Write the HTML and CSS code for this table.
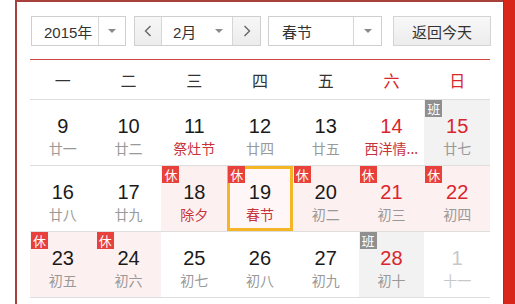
FILE: index.html
```html
<!DOCTYPE html>
<html lang="zh-CN">
<head>
<meta charset="utf-8">
<title>万年历</title>
<link rel="stylesheet" href="styles.css">
</head>
<body>
<div class="frame">
  <div class="panel">
    <div class="controls">
      <div class="select year">
        <span class="sel-text">2015年</span>
        <span class="sel-arrow"><i class="tri"></i></span>
      </div>
      <div class="select month">
        <span class="nav-btn"><svg width="8" height="12" viewBox="0 0 8 12"><polyline points="6.5,1 1.5,6 6.5,11" fill="none" stroke="#666" stroke-width="1.4"/></svg></span>
        <span class="sel-text mid">2月<i class="tri"></i></span>
        <span class="nav-btn next"><svg width="8" height="12" viewBox="0 0 8 12"><polyline points="1.5,1 6.5,6 1.5,11" fill="none" stroke="#666" stroke-width="1.4"/></svg></span>
      </div>
      <div class="select holiday">
        <span class="sel-text">春节</span>
        <span class="sel-arrow"><i class="tri"></i></span>
      </div>
      <div class="today-btn">返回今天</div>
    </div>
    <div class="cal">
      <div class="week">
        <span>一</span><span>二</span><span>三</span><span>四</span><span>五</span><span class="red">六</span><span class="red">日</span>
      </div>
      <div class="row">
        <div class="cell"><b>9</b><em>廿一</em></div>
        <div class="cell"><b>10</b><em>廿二</em></div>
        <div class="cell"><b>11</b><em class="fest">祭灶节</em></div>
        <div class="cell"><b>12</b><em>廿四</em></div>
        <div class="cell"><b>13</b><em>廿五</em></div>
        <div class="cell wk"><b>14</b><em class="fest">西洋情...</em></div>
        <div class="cell wk work"><i class="badge ban">班</i><b>15</b><em>廿七</em></div>
      </div>
      <div class="row">
        <div class="cell"><b>16</b><em>廿八</em></div>
        <div class="cell"><b>17</b><em>廿九</em></div>
        <div class="cell rest"><i class="badge">休</i><b>18</b><em class="fest">除夕</em></div>
        <div class="cell rest today"><i class="badge">休</i><b>19</b><em class="fest">春节</em></div>
        <div class="cell rest"><i class="badge">休</i><b>20</b><em>初二</em></div>
        <div class="cell rest wk"><i class="badge">休</i><b>21</b><em>初三</em></div>
        <div class="cell rest wk"><i class="badge">休</i><b>22</b><em>初四</em></div>
      </div>
      <div class="row">
        <div class="cell rest"><i class="badge">休</i><b>23</b><em>初五</em></div>
        <div class="cell rest"><i class="badge">休</i><b>24</b><em>初六</em></div>
        <div class="cell"><b>25</b><em>初七</em></div>
        <div class="cell"><b>26</b><em>初八</em></div>
        <div class="cell"><b>27</b><em>初九</em></div>
        <div class="cell wk work"><i class="badge ban">班</i><b>28</b><em>初十</em></div>
        <div class="cell other"><b>1</b><em>十一</em></div>
      </div>
    </div>
  </div>
  <div class="redbar"></div>
</div>
</body>
</html>
```
FILE: styles.css
```css
* { box-sizing: border-box; }
html, body { margin: 0; padding: 0; background: #fff; }
body {
  font-family: "Liberation Sans", "Noto Sans CJK SC", sans-serif;
  color: #333;
  width: 515px;
  height: 304px;
  overflow: hidden;
}
.frame { display: flex; height: 304px; }
.panel {
  flex: 1;
  margin-left: 15px;
  border-left: 2px solid #a8403c;
  border-top: 2px solid #a8403c;
  padding: 14px 13px 0 13px;
}
.redbar {
  width: 12px;
  background: #d8261b;
  border-left: 1px solid #c0221a;
}
.controls {
  display: flex;
  align-items: stretch;
  height: 30px;
  font-size: 15px;
}
.select {
  display: flex;
  border: 1px solid #cfcfcf;
  background: #fff;
}
.sel-text {
  display: flex;
  align-items: center;
  padding-left: 12px;
}
.sel-arrow {
  display: flex;
  align-items: center;
  justify-content: center;
  border-left: 1px solid #d6d6d6;
}
.tri {
  display: inline-block;
  width: 0; height: 0;
  border-left: 4px solid transparent;
  border-right: 4px solid transparent;
  border-top: 4px solid #8a8a8a;
}
.year { width: 95px; margin-left: 1px; }
.year .sel-text { width: 66px; }
.year .sel-arrow { width: 27px; }
.month { width: 127px; margin-left: 8px; }
.nav-btn {
  width: 27px;
  display: flex;
  align-items: center;
  justify-content: center;
  background: linear-gradient(#f7f7f7, #ececec);
  border-right: 1px solid #d6d6d6;
}
.nav-btn.next { border-right: 0; border-left: 1px solid #d6d6d6; width: 28px; }
.month .mid {
  flex: 1;
  padding-left: 11px;
  justify-content: space-between;
  padding-right: 9px;
}
.holiday { width: 114px; margin-left: 7px; }
.holiday .sel-text { width: 84px; padding-left: 13px; }
.holiday .sel-arrow { flex: 1; }
.today-btn {
  margin-left: auto;
  width: 98px;
  margin-right: -1px;
  border: 1px solid #d4d4d4;
  background: linear-gradient(#f8f8f8, #ececec);
  display: flex;
  align-items: center;
  justify-content: center;
}
.cal {
  margin-top: 13px;
  border-top: 1px solid #d0463f;
}
.week {
  display: grid;
  grid-template-columns: repeat(7, 1fr);
  height: 40px;
  border-bottom: 1px solid #dedede;
  align-items: center;
  text-align: center;
  font-size: 16px;
  color: #333;
  font-family: "Noto Sans CJK SC", sans-serif;
}
.week .red { color: #d9262c; }
.row {
  display: grid;
  grid-template-columns: repeat(7, 1fr);
  height: 66px;
  border-bottom: 1px solid #dedede;
}
.cell {
  position: relative;
  display: flex;
  flex-direction: column;
  align-items: center;
  padding-top: 14px;
}
.cell b {
  font-weight: normal;
  font-size: 20px;
  line-height: 24px;
  color: #1a1a1a;
  font-family: "Liberation Sans", sans-serif;
}
.cell em {
  font-style: normal;
  font-size: 14px;
  line-height: 20px;
  color: #999;
  font-family: "Noto Sans CJK SC", sans-serif;
}
.cell em.fest { color: #c8333a; }
.cell.wk b { color: #d9262c; }
.cell.rest { background: #fdf0f0; }
.cell.work { background: #f2f2f2; }
.cell.other b, .cell.other em { color: #c8c8c8; }
.cell.today { box-shadow: inset 0 0 0 3px #f4b526; background: #fff7f7; }
.badge {
  position: absolute;
  left: 1px;
  top: 0;
  width: 17px;
  height: 17px;
  background: #e8403a;
  color: #fff;
  font-style: normal;
  font-size: 13px;
  line-height: 17px;
  text-align: center;
  font-family: "Noto Sans CJK SC", sans-serif;
}
.badge.ban { background: #8f8f8f; }
```
